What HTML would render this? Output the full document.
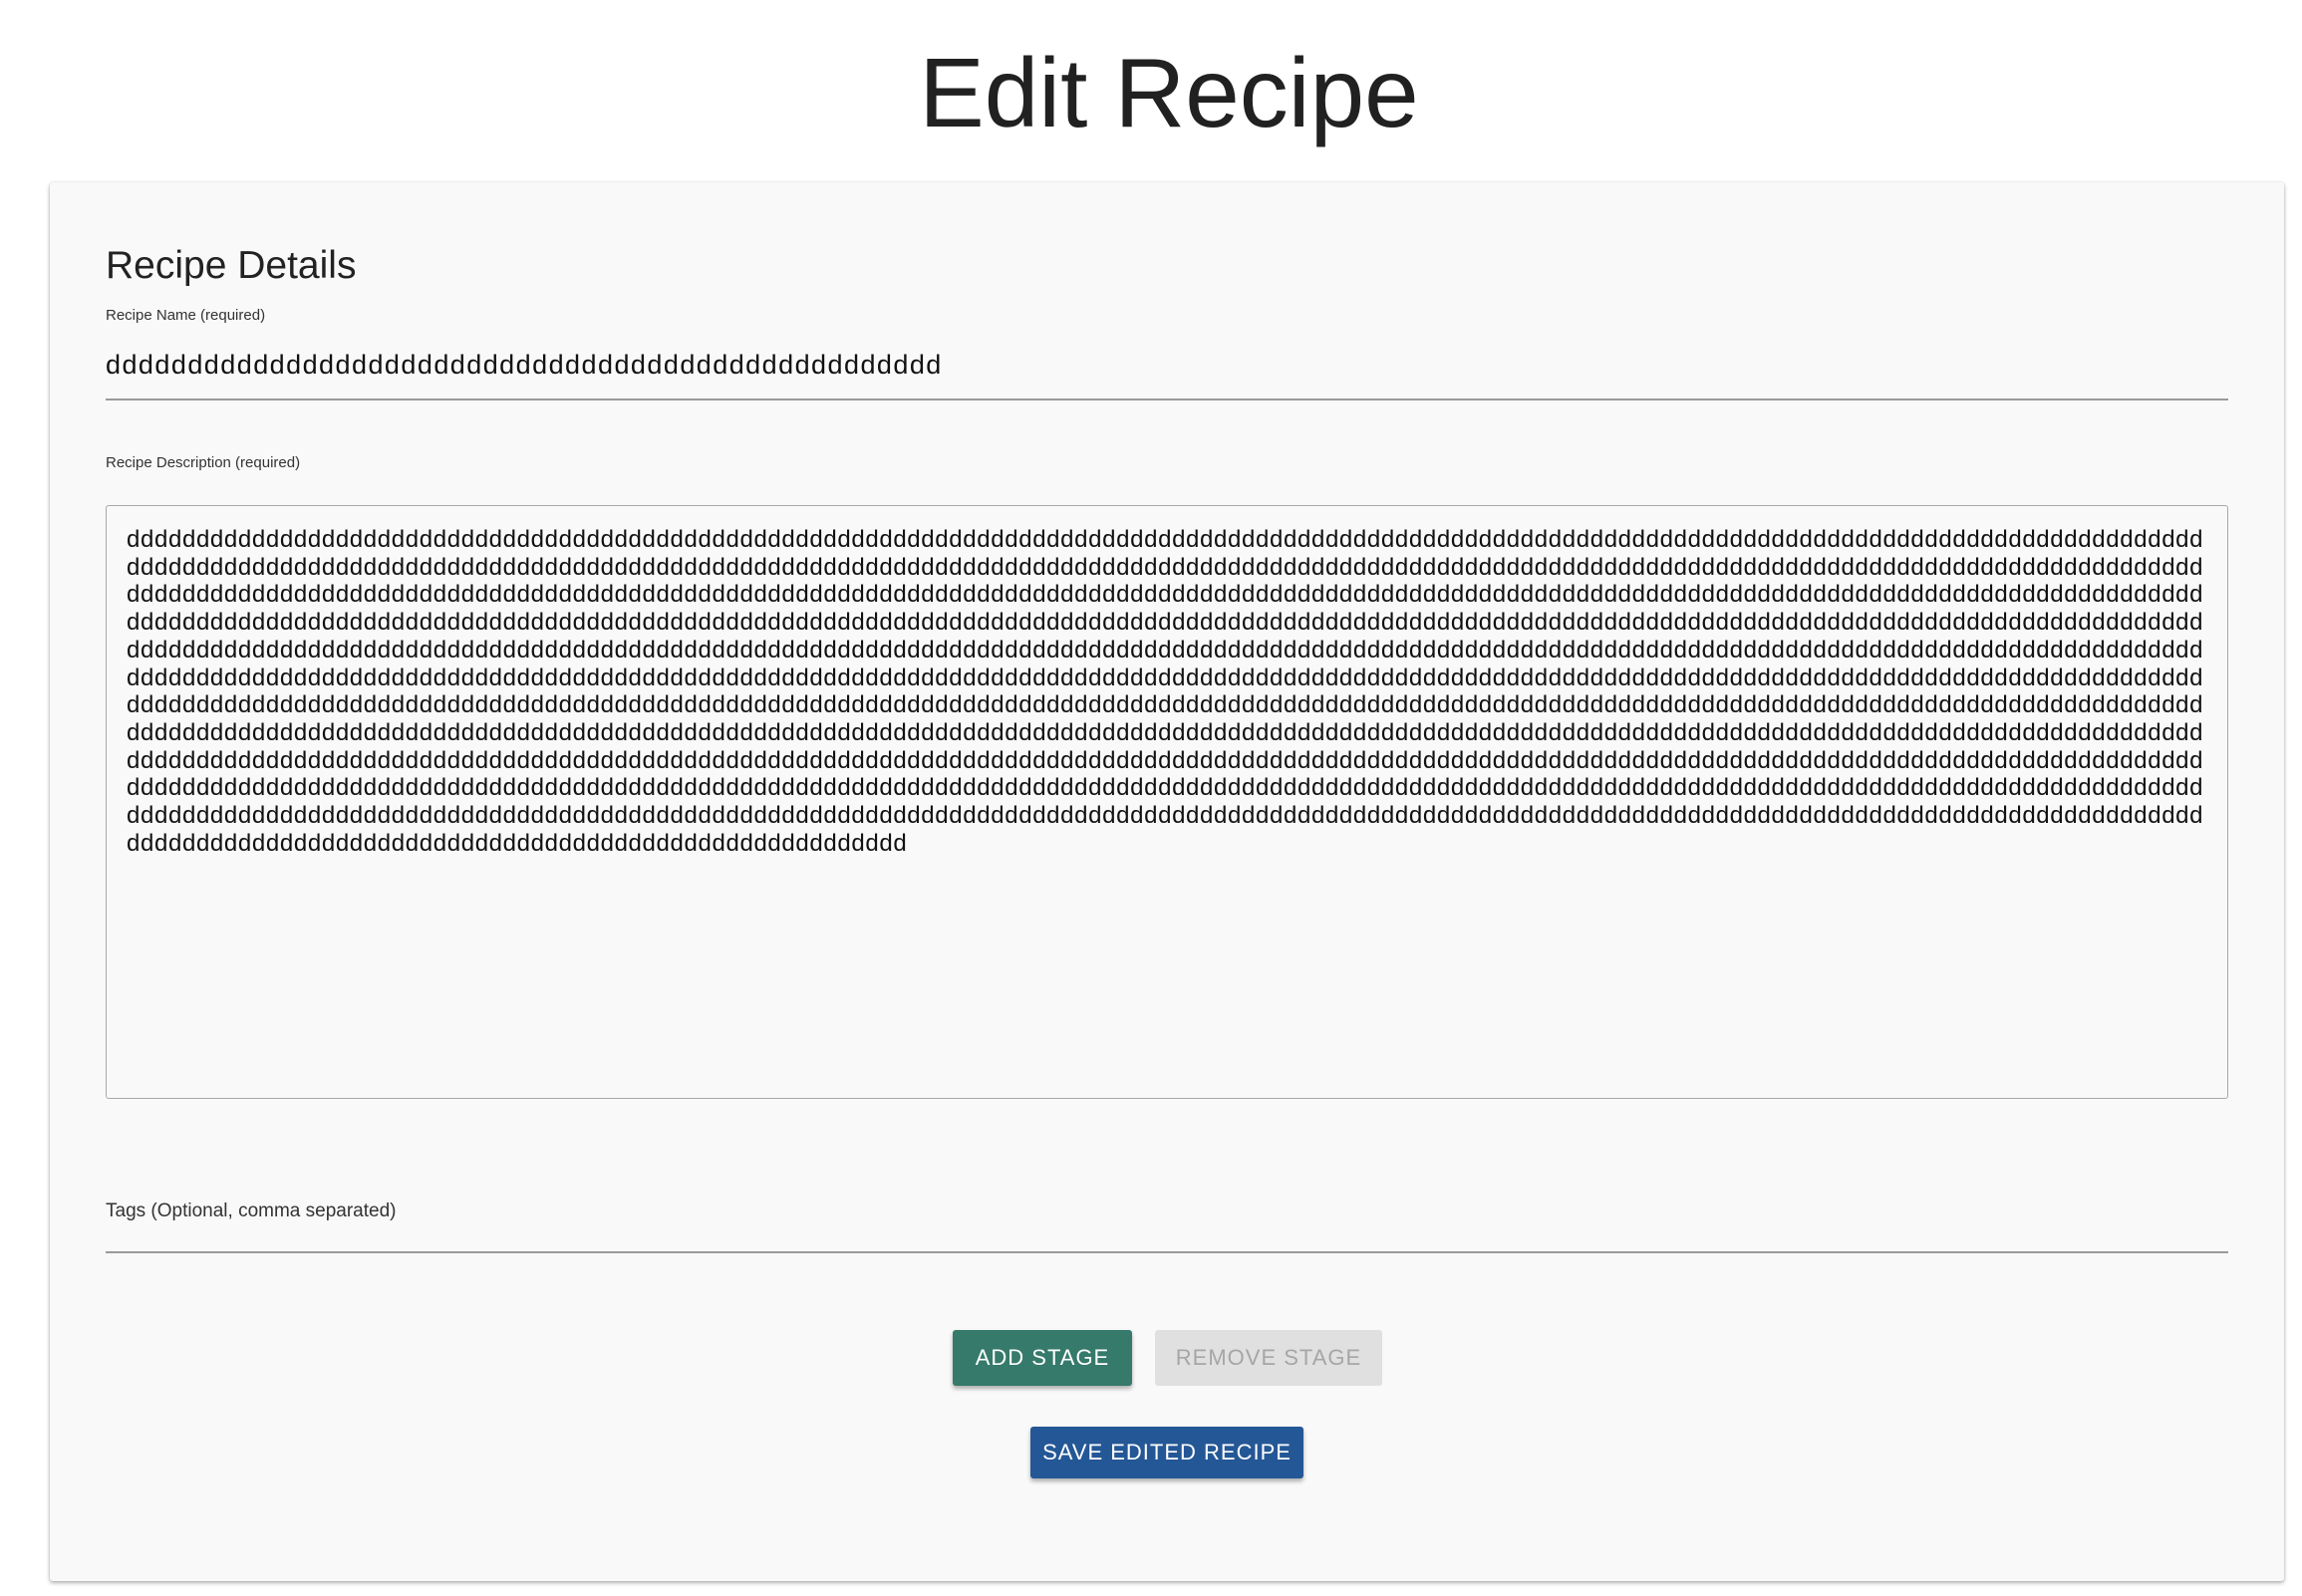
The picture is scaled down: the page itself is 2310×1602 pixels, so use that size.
<!DOCTYPE html>
<html><head><meta charset="utf-8"><style>
*{margin:0;padding:0;box-sizing:border-box}
body{width:2310px;height:1602px;background:#fff;font-family:"Liberation Sans",sans-serif;position:relative;overflow:hidden;color:#212121}
.abs{position:absolute;white-space:nowrap}
h1{position:absolute;left:0;width:2346px;text-align:center;top:28px;font-size:98px;font-weight:400;color:#212121;line-height:130px}
.card{position:absolute;left:50px;top:183px;width:2242px;height:1404px;background:#f9f9f9;box-shadow:0 2px 4px rgba(0,0,0,.3),0 0 2px rgba(0,0,0,.12);border-radius:3px}
.line{position:absolute;left:106px;width:2130px;height:2px;background:#9a9a9a}
.ta{position:absolute;left:106px;top:507px;width:2130px;height:596px;border:1.5px solid #a8a8a8;border-radius:3px}
.desc{position:absolute;left:127px;top:528px;font-size:24px;line-height:27.7px;letter-spacing:0.64px;color:#111;white-space:pre}
.btn{position:absolute;font-size:22px;letter-spacing:1px;display:flex;align-items:center;justify-content:center;border-radius:3px}
</style></head><body>
<h1>Edit Recipe</h1>
<div class="card"></div>
<div class="abs" style="left:106px;top:245px;font-size:39px;color:#222">Recipe Details</div>
<div class="abs" style="left:106px;top:308px;font-size:15px;color:#333">Recipe Name (required)</div>
<div class="abs" style="left:106px;top:351px;font-size:27px;letter-spacing:1.45px;color:#111">ddddddddddddddddddddddddddddddddddddddddddddddddddd</div>
<div class="line" style="top:400px"></div>
<div class="abs" style="left:106px;top:456px;font-size:15px;color:#333">Recipe Description (required)</div>
<div class="ta"></div>
<div class="desc">ddddddddddddddddddddddddddddddddddddddddddddddddddddddddddddddddddddddddddddddddddddddddddddddddddddddddddddddddddddddddddddddddddddddddddddddddddddd
ddddddddddddddddddddddddddddddddddddddddddddddddddddddddddddddddddddddddddddddddddddddddddddddddddddddddddddddddddddddddddddddddddddddddddddddddddddd
ddddddddddddddddddddddddddddddddddddddddddddddddddddddddddddddddddddddddddddddddddddddddddddddddddddddddddddddddddddddddddddddddddddddddddddddddddddd
ddddddddddddddddddddddddddddddddddddddddddddddddddddddddddddddddddddddddddddddddddddddddddddddddddddddddddddddddddddddddddddddddddddddddddddddddddddd
ddddddddddddddddddddddddddddddddddddddddddddddddddddddddddddddddddddddddddddddddddddddddddddddddddddddddddddddddddddddddddddddddddddddddddddddddddddd
ddddddddddddddddddddddddddddddddddddddddddddddddddddddddddddddddddddddddddddddddddddddddddddddddddddddddddddddddddddddddddddddddddddddddddddddddddddd
ddddddddddddddddddddddddddddddddddddddddddddddddddddddddddddddddddddddddddddddddddddddddddddddddddddddddddddddddddddddddddddddddddddddddddddddddddddd
ddddddddddddddddddddddddddddddddddddddddddddddddddddddddddddddddddddddddddddddddddddddddddddddddddddddddddddddddddddddddddddddddddddddddddddddddddddd
ddddddddddddddddddddddddddddddddddddddddddddddddddddddddddddddddddddddddddddddddddddddddddddddddddddddddddddddddddddddddddddddddddddddddddddddddddddd
ddddddddddddddddddddddddddddddddddddddddddddddddddddddddddddddddddddddddddddddddddddddddddddddddddddddddddddddddddddddddddddddddddddddddddddddddddddd
ddddddddddddddddddddddddddddddddddddddddddddddddddddddddddddddddddddddddddddddddddddddddddddddddddddddddddddddddddddddddddddddddddddddddddddddddddddd
dddddddddddddddddddddddddddddddddddddddddddddddddddddddd</div>
<div class="abs" style="left:106px;top:1205px;font-size:19px;color:#333">Tags (Optional, comma separated)</div>
<div class="line" style="top:1256px"></div>
<div class="btn" style="left:956px;top:1335px;width:180px;height:56px;background:#357a6b;color:#fff;box-shadow:0 3px 4px rgba(0,0,0,.3)">ADD STAGE</div>
<div class="btn" style="left:1159px;top:1335px;width:228px;height:56px;background:#e0e0e0;color:#a6a6a6">REMOVE STAGE</div>
<div class="btn" style="left:1034px;top:1432px;width:274px;height:52px;background:#245796;color:#fff;box-shadow:0 3px 4px rgba(0,0,0,.3)">SAVE EDITED RECIPE</div>
</body></html>
